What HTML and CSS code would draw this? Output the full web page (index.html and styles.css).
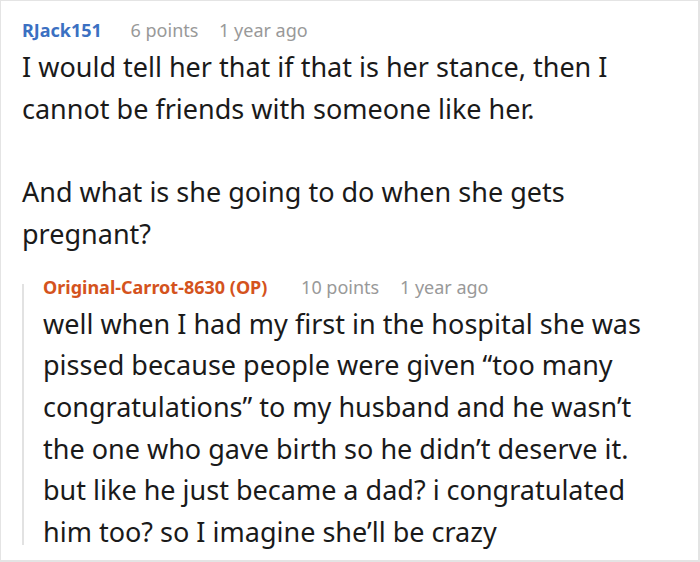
FILE: index.html
```html
<!DOCTYPE html>
<html>
<head>
<meta charset="utf-8">
<link rel="stylesheet" href="styles.css">
</head>
<body>
<div class="thread">
  <div class="comment">
    <div class="meta">
      <span class="user">RJack151</span>
      <span class="points">6 points</span>
      <span class="time">1 year ago</span>
    </div>
    <div class="body">
      <p>I would tell her that if that is her stance, then I cannot be friends with someone like her.</p>
      <p>And what is she going to do when she gets pregnant?</p>
    </div>
  </div>
  <div class="reply">
    <div class="meta">
      <span class="user op">Original-Carrot-8630 (OP)</span>
      <span class="points">10 points</span>
      <span class="time">1 year ago</span>
    </div>
    <div class="body">
      <p>well when I had my first in the hospital she was pissed because people were given “too many congratulations” to my husband and he wasn’t the one who gave birth so he didn’t deserve it. but like he just became a dad? i congratulated him too? so I imagine she’ll be crazy</p>
    </div>
  </div>
</div>
</body>
</html>
```

FILE: styles.css
```css
html, body {
  margin: 0;
  padding: 0;
  background: #fff;
}
.thread {
  width: 700px;
  height: 562px;
  box-sizing: border-box;
  border-style: solid;
  border-color: #e4e4e4;
  border-width: 1px 2px 2px 1px;
  padding: 17px 20px 0 21px;
  overflow: hidden;
  font-family: "Noto Sans", sans-serif;
  color: #1a1a1a;
}
.meta {
  font-size: 18px;
  line-height: 24px;
  white-space: nowrap;
}
.user {
  font-weight: 700;
  color: #3b70c2;
  margin-right: 24px;
}
.user.op {
  color: #d4531d;
  margin-right: 29px;
}
.points, .time {
  color: #999;
}
.points {
  margin-right: 16px;
}
.body {
  font-size: 27px;
  line-height: 41.7px;
  margin-top: 4px;
}
.body p {
  margin: 0 0 41.7px 0;
}
.body p:last-child {
  margin-bottom: 0;
}
.reply {
  position: relative;
  margin-top: 20px;
  padding-left: 21px;
}
.reply::before {
  content: "";
  position: absolute;
  left: 0;
  top: 9px;
  bottom: 8px;
  width: 2px;
  background: #e2e2e2;
}
```
